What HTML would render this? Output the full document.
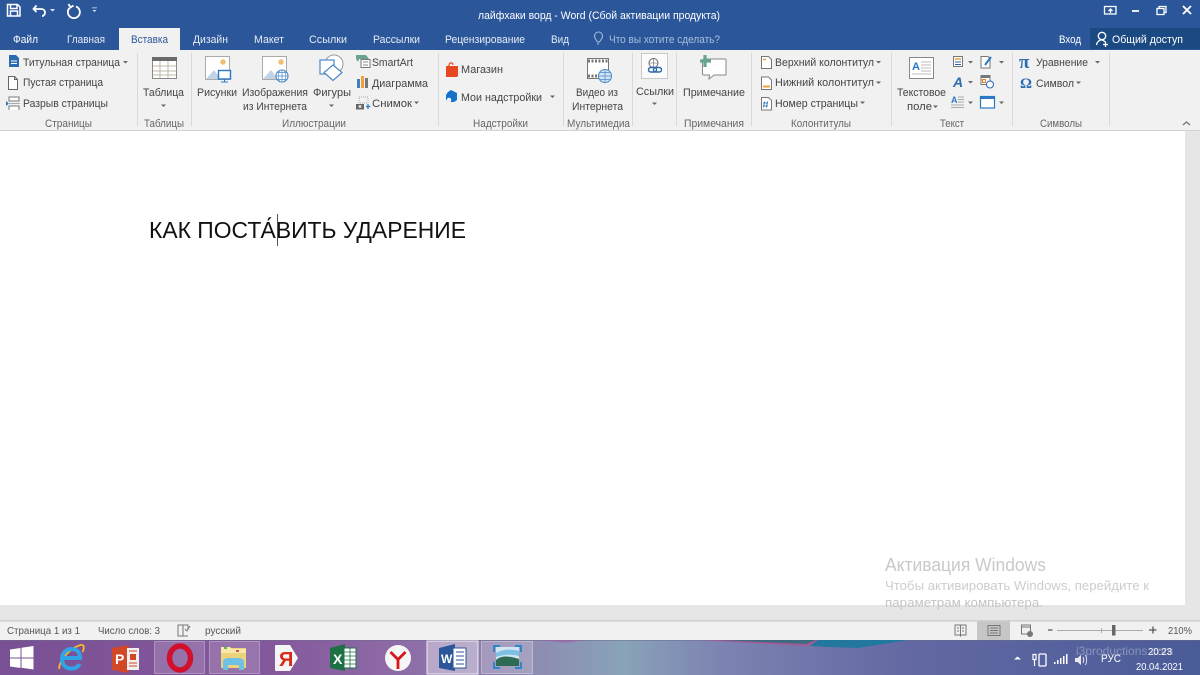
<!DOCTYPE html>
<html lang="ru"><head><meta charset="utf-8"><title>лайфхаки ворд - Word</title>
<style>
html,body{margin:0;padding:0;width:1200px;height:675px;overflow:hidden;background:#fff}
svg{display:block;position:absolute;left:0;top:0;filter:blur(.3px)}
text{font-family:"Liberation Sans","DejaVu Sans",sans-serif;font-size:11px;fill:#444}
.w text{fill:#fff}
.g text{fill:#666}
.s text{fill:#555;font-size:10.5px}
</style></head><body>
<svg width="1200" height="675" viewBox="0 0 1200 675" xmlns="http://www.w3.org/2000/svg">
<defs>
<linearGradient id="tb" x1="0" x2="1" y1="0" y2="0">
<stop offset="0" stop-color="#7a5094"/><stop offset=".22" stop-color="#83589b"/><stop offset=".33" stop-color="#8d6aa6"/><stop offset=".43" stop-color="#8f87b0"/><stop offset=".52" stop-color="#88a3b8"/><stop offset=".6" stop-color="#7d83b1"/><stop offset=".75" stop-color="#6469a3"/><stop offset="1" stop-color="#4a5b98"/>
</linearGradient>
</defs>
<!-- title bar -->
<rect width="1200" height="50" fill="#2b579a"/>
<rect x="1090" y="28" width="110" height="21" fill="#1b4a83"/>
<rect x="119" y="28" width="61" height="22" fill="#f1f1f1"/>
<rect y="50" width="1200" height="80" fill="#f1f1f1"/>
<rect y="130" width="1200" height="1" fill="#d2d2d2"/>
<rect y="131" width="1200" height="474" fill="#fff"/>
<rect x="1185" y="131" width="15" height="489" fill="#e6e6e6"/>
<rect y="605" width="1200" height="15" fill="#e6e6e6"/>
<rect y="620" width="1200" height="1.5" fill="#cfcfcf"/>
<rect y="621.500" width="1200" height="18.500" fill="#f1f1f1"/>
<!-- QAT -->
<g fill="none" stroke="#fff" stroke-width="1.500">
<path d="M7.500 4.500h10l2.500 2.500v9H7.500zM10.500 4.500v4h6.500v-4M10.500 16v-5h7v5"/>
<path d="M34 9h7c3 0 4 2 4 3.500S44 16 42 16M36.500 5.500 33.500 9l3 3" stroke-width="1.800"/>
<path d="M76 6.500A6 6 0 1 1 69.500 8M68.500 4l2 3.500 3-2" stroke-width="1.800"/>
</g>
<path d="M50 9h5l-2.500 2.500zM92 7.500h5v.8h-5zM92.500 10h4l-2 2z" fill="#dfe7f3"/>
<!-- window controls -->
<g fill="none" stroke="#fff" stroke-width="1.300">
<rect x="1104.500" y="6.500" width="11.500" height="7.500"/><path d="M1110.500 13V9M1108.500 11l2-2 2 2"/>
<path d="M1132 11h7" stroke-width="1.800"/>
<rect x="1157" y="8.500" width="7" height="6"/><path d="M1159 8.500V6.500h7v6h-2"/>
<path d="M1183 6l8 8M1191 6l-8 8" stroke-width="1.900"/>
</g>
<g class="w">
<text x="478" y="19" textLength="242" lengthAdjust="spacingAndGlyphs">лайфхаки ворд - Word (Сбой активации продукта)</text>
<text x="13" y="43" textLength="25" lengthAdjust="spacingAndGlyphs">Файл</text>
<text x="67" y="43" textLength="38" lengthAdjust="spacingAndGlyphs" style="fill:#e6ecf5">Главная</text>
<text x="193" y="43" textLength="35" lengthAdjust="spacingAndGlyphs" style="fill:#e6ecf5">Дизайн</text>
<text x="254" y="43" textLength="30" lengthAdjust="spacingAndGlyphs" style="fill:#e6ecf5">Макет</text>
<text x="309" y="43" textLength="38" lengthAdjust="spacingAndGlyphs" style="fill:#e6ecf5">Ссылки</text>
<text x="373" y="43" textLength="47" lengthAdjust="spacingAndGlyphs" style="fill:#e6ecf5">Рассылки</text>
<text x="445" y="43" textLength="80" lengthAdjust="spacingAndGlyphs" style="fill:#e6ecf5">Рецензирование</text>
<text x="551" y="43" textLength="18" lengthAdjust="spacingAndGlyphs" style="fill:#e6ecf5">Вид</text>
<text x="609" y="43" textLength="111" lengthAdjust="spacingAndGlyphs" style="fill:#a9bfdc">Что вы хотите сделать?</text>
<text x="1059" y="43" textLength="22" lengthAdjust="spacingAndGlyphs">Вход</text>
<text x="1112" y="43" textLength="71" lengthAdjust="spacingAndGlyphs">Общий доступ</text>
</g>
<text x="131" y="43" textLength="37" lengthAdjust="spacingAndGlyphs" style="fill:#2b579a">Вставка</text>
<path d="M597.500 42c-1-2-3-3-3-6a4 4 0 0 1 8 0c0 3-2 4-3 6zM597 44h2" fill="none" stroke="#a9bfdc"/>
<g fill="none" stroke="#fff" stroke-width="1.300"><circle cx="1102" cy="36" r="3.700"/><path d="M1096.500 45c.5-3 2-4.500 5-5.200 2 .7 3 1 4 2.500M1105.500 42v5M1103 44.500h5"/></g>

<!-- ribbon separators -->
<g fill="#d9d9d9">
<rect x="137" y="53" width="1" height="73"/><rect x="191" y="53" width="1" height="73"/><rect x="438" y="53" width="1" height="73"/><rect x="563" y="53" width="1" height="73"/><rect x="632" y="53" width="1" height="73"/><rect x="676" y="53" width="1" height="73"/><rect x="751" y="53" width="1" height="73"/><rect x="891" y="53" width="1" height="73"/><rect x="1012" y="53" width="1" height="73"/><rect x="1109" y="53" width="1" height="73"/>
</g>
<!-- ribbon labels -->
<g>
<text x="23" y="66" textLength="97" lengthAdjust="spacingAndGlyphs">Титульная страница</text>
<text x="23" y="86" textLength="80" lengthAdjust="spacingAndGlyphs">Пустая страница</text>
<text x="23" y="107" textLength="85" lengthAdjust="spacingAndGlyphs">Разрыв страницы</text>
<text x="143" y="96" textLength="41" lengthAdjust="spacingAndGlyphs">Таблица</text>
<text x="197" y="96" textLength="40" lengthAdjust="spacingAndGlyphs">Рисунки</text>
<text x="242" y="96" textLength="66" lengthAdjust="spacingAndGlyphs">Изображения</text>
<text x="243" y="110" textLength="64" lengthAdjust="spacingAndGlyphs">из Интернета</text>
<text x="313" y="96" textLength="38" lengthAdjust="spacingAndGlyphs">Фигуры</text>
<text x="372" y="66" textLength="41" lengthAdjust="spacingAndGlyphs">SmartArt</text>
<text x="372" y="87" textLength="56" lengthAdjust="spacingAndGlyphs">Диаграмма</text>
<text x="372" y="107" textLength="40" lengthAdjust="spacingAndGlyphs">Снимок</text>
<text x="461" y="73" textLength="42" lengthAdjust="spacingAndGlyphs">Магазин</text>
<text x="461" y="101" textLength="81" lengthAdjust="spacingAndGlyphs">Мои надстройки</text>
<text x="576" y="96" textLength="42" lengthAdjust="spacingAndGlyphs">Видео из</text>
<text x="572" y="110" textLength="51" lengthAdjust="spacingAndGlyphs">Интернета</text>
<text x="636" y="95" textLength="38" lengthAdjust="spacingAndGlyphs">Ссылки</text>
<text x="683" y="96" textLength="62" lengthAdjust="spacingAndGlyphs">Примечание</text>
<text x="775" y="66" textLength="99" lengthAdjust="spacingAndGlyphs">Верхний колонтитул</text>
<text x="775" y="86" textLength="99" lengthAdjust="spacingAndGlyphs">Нижний колонтитул</text>
<text x="775" y="107" textLength="83" lengthAdjust="spacingAndGlyphs">Номер страницы</text>
<text x="897" y="96" textLength="49" lengthAdjust="spacingAndGlyphs">Текстовое</text>
<text x="907" y="110" textLength="25" lengthAdjust="spacingAndGlyphs">поле</text>
<text x="1036" y="66" textLength="52" lengthAdjust="spacingAndGlyphs">Уравнение</text>
<text x="1036" y="87" textLength="38" lengthAdjust="spacingAndGlyphs">Символ</text>
</g>
<g class="g">
<text x="45" y="127" textLength="47" lengthAdjust="spacingAndGlyphs">Страницы</text>
<text x="144" y="127" textLength="40" lengthAdjust="spacingAndGlyphs">Таблицы</text>
<text x="282" y="127" textLength="64" lengthAdjust="spacingAndGlyphs">Иллюстрации</text>
<text x="473" y="127" textLength="55" lengthAdjust="spacingAndGlyphs">Надстройки</text>
<text x="567" y="127" textLength="63" lengthAdjust="spacingAndGlyphs">Мультимедиа</text>
<text x="684" y="127" textLength="60" lengthAdjust="spacingAndGlyphs">Примечания</text>
<text x="791" y="127" textLength="60" lengthAdjust="spacingAndGlyphs">Колонтитулы</text>
<text x="940" y="127" textLength="24" lengthAdjust="spacingAndGlyphs">Текст</text>
<text x="1040" y="127" textLength="42" lengthAdjust="spacingAndGlyphs">Символы</text>
</g>
<!-- dropdown arrows -->
<g fill="#666">
<path d="M123 61h5l-2.500 2.500zM161 104.500h5l-2.500 2.500zM329 104.500h5l-2.500 2.500zM414 101.500h5l-2.500 2.500zM550 95.500h5l-2.500 2.500zM652 102.500h5l-2.500 2.500zM876 61h5l-2.500 2.500zM876 81.500h5l-2.500 2.500zM860 101.500h5l-2.500 2.500zM933 105.500h5l-2.500 2.500zM968 61h5l-2.500 2.500zM968 81h5l-2.500 2.500zM968 101.500h5l-2.500 2.500zM999 61h5l-2.500 2.500zM999 101.500h5l-2.500 2.500zM1095 61h5l-2.500 2.500zM1076 81.500h5l-2.500 2.500z"/>
</g>
<path d="M1183 125l3.500-3 3.500 3" fill="none" stroke="#777" stroke-width="1.300"/>

<!-- Страницы icons -->
<path d="M9 55h7l3 3v9H9z" fill="#2b6cb0"/><path d="M11 61h6M11 63.500h6" stroke="#fff"/>
<path d="M8.500 76.500h6l3 3v10h-9zM14.500 76.500v3h3" fill="#fff" stroke="#666"/>
<path d="M9 97h10v4H9zM9 110v-4h10v4" fill="#fff" stroke="#777"/><path d="M6 101l3 2.500-3 2.500z" fill="#2b79c2"/><path d="M8 103.500h12" stroke="#aaa"/>
<!-- Table -->
<rect x="152.500" y="57.500" width="24" height="21" fill="#fff" stroke="#8a8a8a"/><rect x="152" y="57" width="25" height="4" fill="#6a6a6a"/>
<path d="M153 66h23M153 71h23M153 75h23M160 61v17M168 61v17" stroke="#c0b9a8"/>
<!-- Рисунки -->
<rect x="205.500" y="56.500" width="24" height="23" fill="#fff" stroke="#aaa"/><path d="M206 79l8-9 7 9z" fill="#c1d3e8"/><circle cx="223" cy="62" r="2.700" fill="#f2bd6c"/>
<rect x="218.500" y="70.500" width="12" height="8.500" fill="#fff" stroke="#2b79c2" stroke-width="1.400"/><path d="M221 82h7M224.500 79v3" stroke="#2b79c2"/>
<!-- Изображения -->
<rect x="262.500" y="56.500" width="24" height="23" fill="#fff" stroke="#aaa"/><path d="M263 79l8-9 7 9z" fill="#c1d3e8"/><circle cx="281" cy="62" r="2.700" fill="#f2bd6c"/>
<circle cx="282" cy="76" r="6" fill="#fff" stroke="#4a88c7" stroke-width="1.100"/><path d="M276 76h12M282 70v12M277.500 72.500h9M277.500 79.500h9M279.500 71c-1.500 3-1.500 7 0 10M284.500 71c1.500 3 1.500 7 0 10" fill="none" stroke="#4a88c7" stroke-width=".7"/>
<!-- Фигуры -->
<circle cx="334" cy="64" r="9" fill="#fff" stroke="#999"/><rect x="320" y="60" width="14" height="14" fill="#fff" stroke="#4a88c7" stroke-width="1.200"/><path d="M333 65l9 7.500-9 8-9-8z" fill="#fff" stroke="#4a88c7" stroke-width="1.200"/>
<!-- SmartArt etc -->
<path d="M356 55h10l3 4h-10l-1 3-2-3z" fill="#6aa48e"/><rect x="361" y="59.500" width="9" height="8" fill="#fff" stroke="#777"/><path d="M363 62h5M363 65h5" stroke="#888"/>
<rect x="357" y="79" width="3" height="9" fill="#3e7fc1"/><rect x="361" y="76" width="3" height="12" fill="#f0a13c"/><rect x="365" y="78" width="3" height="10" fill="#777"/>
<rect x="359" y="97" width="9" height="6" fill="none" stroke="#aaa" stroke-dasharray="1 1"/><rect x="356" y="104" width="8" height="5.500" fill="#666"/><circle cx="360" cy="106.500" r="1.500" fill="#ddd"/><path d="M366 106.500h4.500M368 104v5" stroke="#2b79c2" stroke-width="1.300"/>
<!-- Store / addins -->
<path d="M446 66h12v9c0 2-1 2-2 2h-10z" fill="#e8481f"/><path d="M449 66c0-4 4-4 4-1" fill="none" stroke="#e8481f" stroke-width="1.200"/>
<path d="M451 90l6 3v7l-3 2h-5l-3-2v-5l2-3z" fill="#1273c9"/><circle cx="449" cy="100" r="2.300" fill="#f1f1f1"/>
<!-- Video -->
<rect x="587.500" y="58.500" width="21" height="20" fill="#fff" stroke="#777"/><path d="M588 61h20M588 76h20" stroke="#777" stroke-width="3" stroke-dasharray="2 1.500"/>
<circle cx="605" cy="76" r="6.500" fill="#d5e4f3" stroke="#4a88c7"/><path d="M598.500 76h13M605 69.500v13M600 72.500h10M600 79.500h10" stroke="#4a88c7" stroke-width=".7"/>
<!-- Link -->
<rect x="641.500" y="53.500" width="26" height="25" fill="#fbfbfb" stroke="#c9c9c9"/>
<circle cx="653.500" cy="63" r="4.500" fill="none" stroke="#666"/><path d="M649 63h9M653.500 58.500v9" stroke="#666" stroke-width=".6"/>
<rect x="648.500" y="67.500" width="8" height="4.500" rx="2.200" fill="none" stroke="#2b67ae" stroke-width="1.400"/><rect x="653.500" y="67.500" width="8" height="4.500" rx="2.200" fill="none" stroke="#2b67ae" stroke-width="1.400"/>
<!-- Comment -->
<path d="M703 59h22c1 0 1 0 1 1v14c0 1 0 1-1 1h-11l-5 4 .5-4h-5c-1 0-2 0-2-1V62" fill="#fff" stroke="#888"/>
<path d="M705 55v12M700 61h11" stroke="#66a593" stroke-width="3.200"/>
<!-- Header/footer -->
<path d="M761.500 56.500h7l3 3v9h-10z" fill="#fff" stroke="#777"/><path d="M763 59.500h3" stroke="#f0a13c" stroke-width="1.500"/>
<path d="M761.500 77h7l3 3v9.500h-10z" fill="#fff" stroke="#777"/><path d="M763 86.500h7" stroke="#f0a13c" stroke-width="2"/>
<path d="M761.500 97.500h7l3 3v9.500h-10z" fill="#fff" stroke="#777"/><path d="M764.500 101.500l-1 6M767.500 101.500l-1 6M763 103h5M763 106h5" stroke="#2b67ae" stroke-width=".8"/>
<!-- Text box -->
<rect x="909.500" y="57.500" width="24" height="21" fill="#fff" stroke="#888"/><text x="912" y="70" style="font-size:11px;fill:#2b79c2" font-weight="bold">A</text><path d="M921 62h10M921 65h10M921 68h10M921 71h10M912 74h19" stroke="#bbb"/>
<!-- Text small icons -->
<rect x="953.500" y="56.500" width="9" height="10" fill="#fff" stroke="#777"/><path d="M955 59h6" stroke="#f0a13c" stroke-width="1.500"/><path d="M955 62h6M955 64.500h6" stroke="#2b67ae"/>
<text x="953" y="87" style="font-size:14px;fill:#2b6cb0;font-style:italic;font-weight:bold">A</text>
<text x="951" y="103" style="font-size:9px;fill:#2b79c2;font-weight:bold">A</text><path d="M958 97h6M958 99.500h6M958 102h6M951 105h13M951 107.500h13" stroke="#aaa"/>
<path d="M981 56.500h7l2 2v9.500h-9z" fill="#fff" stroke="#777"/><path d="M985 65l6-8" stroke="#2b79c2" stroke-width="2"/>
<rect x="981" y="75.500" width="9" height="9" fill="#fff" stroke="#777"/><path d="M981 77h9" stroke="#777" stroke-width="2"/><rect x="982.500" y="79.500" width="3" height="3" fill="none" stroke="#e07b2a"/><circle cx="990" cy="84.500" r="3.500" fill="#fff" stroke="#2b67ae"/>
<rect x="980.500" y="96.500" width="14" height="11.500" fill="#fff" stroke="#2b79c2" stroke-width="1.200"/><rect x="980" y="96" width="15" height="3" fill="#2b79c2"/>
<!-- Symbols -->
<text x="1019" y="68" style="font-size:19px;fill:#2b6cb0;font-weight:bold;font-family:'Liberation Serif',serif">π</text>
<text x="1020" y="88" style="font-size:15px;fill:#2b6cb0;font-weight:bold;font-family:'Liberation Serif',serif">Ω</text>

<!-- Document text -->
<text x="149" y="238" textLength="317" lengthAdjust="spacingAndGlyphs" style="font-size:23.500px;fill:#111">КАК ПОСТА́ВИТЬ УДАРЕНИЕ</text>
<rect x="277" y="214" width="1" height="32" fill="#555"/>

<!-- Activation -->
<text x="885" y="571" textLength="161" lengthAdjust="spacingAndGlyphs" style="font-size:18px;fill:#c9c9c9">Активация Windows</text>
<text x="885" y="590" textLength="264" lengthAdjust="spacingAndGlyphs" style="font-size:13px;fill:#cdcdcd">Чтобы активировать Windows, перейдите к</text>
<text x="885" y="607" textLength="158" lengthAdjust="spacingAndGlyphs" style="font-size:13px;fill:#c4c4c4">параметрам компьютера.</text>

<!-- Status bar -->
<g class="s">
<text x="7" y="634" textLength="73" lengthAdjust="spacingAndGlyphs">Страница 1 из 1</text>
<text x="98" y="634" textLength="62" lengthAdjust="spacingAndGlyphs">Число слов: 3</text>
<text x="205" y="634" textLength="36" lengthAdjust="spacingAndGlyphs">русский</text>
<text x="1168" y="634" textLength="24" lengthAdjust="spacingAndGlyphs">210%</text>
</g>
<path d="M178 625h5v11h-5zM183 625h5v4M183 636h5" fill="none" stroke="#777"/><path d="M185 629l2 2 3-5" fill="none" stroke="#777"/>
<rect x="977" y="621.500" width="33" height="18.500" fill="#c6c6c6"/>
<path d="M955 625h5l.5 1 .5-1h5v10h-5l-.5 1-.5-1h-5zM960.500 626v9M957 628h2M957 631h2M962 628h2M962 631h2" fill="none" stroke="#777"/>
<rect x="988" y="625.500" width="12" height="10" fill="none" stroke="#777"/><path d="M990 628h8M990 630.500h8M990 633h8" stroke="#777"/>
<rect x="1021.500" y="625" width="9" height="9" fill="none" stroke="#777"/><path d="M1021 627h10" stroke="#777"/><circle cx="1030" cy="634" r="3" fill="#777"/>
<path d="M1048 630h4.500M1149 630h7.500M1153 626.500v7" stroke="#555" stroke-width="1.300"/>
<rect x="1057" y="630" width="86" height="1" fill="#aaa"/><rect x="1101" y="628" width="1" height="5" fill="#aaa"/><rect x="1112" y="625" width="3.500" height="10.500" fill="#666"/>

<!-- Taskbar -->
<rect y="640" width="1200" height="35" fill="url(#tb)"/>
<rect y="640" width="1200" height="1" fill="#6a6a8a" opacity=".5"/>
<path d="M540 640h45l-20 3z" fill="#a05fa8" opacity=".6"/>
<path d="M700 640h120l-12 6-5 0z" fill="#a25a96"/><path d="M718 640h98l-10 4z" fill="#3d6a80"/>
<path d="M818 640h90l-50 8-30 -1-18-1z" fill="#22779f"/>
<!-- pinned highlights -->
<rect x="154.500" y="641.500" width="50" height="32" fill="#fff" fill-opacity=".17" stroke="#fff" stroke-opacity=".3"/>
<rect x="209.500" y="641.500" width="50" height="32" fill="#fff" fill-opacity=".17" stroke="#fff" stroke-opacity=".3"/>
<rect x="427" y="641" width="51" height="33" fill="#fff" fill-opacity=".38" stroke="#fff" stroke-opacity=".8"/>
<rect x="481.500" y="641.500" width="51" height="32" fill="#fff" fill-opacity=".2" stroke="#fff" stroke-opacity=".35"/>
<!-- Windows -->
<path d="M10 649.500l10.500-1.500v9.500H10zM21.500 647.800L33.500 646v11.500h-12zM10 658.500h10.500v9.500L10 666.500zM21.500 658.500h12v11l-12-1.700z" fill="#fff"/>
<!-- IE -->
<path d="M59.500 669c-2-5 8-20 21-24 4-1 4 3 2 7" fill="none" stroke="#f2b928" stroke-width="1.800"/>
<path d="M63 658h17c0-6-3.500-9-8.500-9S62 653 62 659s4 9.500 9.500 9.500c4 0 7-2 8-4.500" fill="none" stroke="#2fa4e7" stroke-width="4"/>
<!-- PPT -->
<path d="M112 648l17-3v28l-17-3z" fill="#d24726"/><rect x="127" y="648" width="12" height="22" fill="#f0f0f0"/><path d="M129 651h8M129 663h8M129 666h8" stroke="#d24726"/><path d="M130 654h6v6h-6z" fill="#d24726"/><text x="115" y="664" style="font-size:14px;font-weight:bold;fill:#fff">P</text>
<!-- Opera -->
<ellipse cx="180" cy="658" rx="10.500" ry="12" fill="none" stroke="#d2102c" stroke-width="5.500"/>
<!-- Explorer -->
<path d="M221 648h25v20h-25z" fill="#edd27e"/><path d="M221 647h9l2 2h14v4h-25z" fill="#f7e8a8"/><rect x="224" y="647" width="3" height="2" fill="#5cb85c"/><rect x="236" y="650" width="3" height="2" fill="#d9534f"/>
<path d="M223 662c0-3 3-4 6-4h9c3 0 6 1 6 4v8h-5v-5h-11v5h-5z" fill="#6ec1e4"/>
<!-- Yandex -->
<path d="M276 645h14l8 13-8 13h-14c-1 0-1-1-1-2v-22c0-1 0-2 1-2z" fill="#f5f5f5"/><text x="279" y="666" style="font-size:20px;fill:#d92a1c;font-weight:bold">Я</text>
<!-- Excel -->
<path d="M330 648l15-4v27l-15-3z" fill="#1d7145"/><rect x="344" y="648" width="12" height="20" fill="#fff" stroke="#1d7145"/><path d="M344 652h12M344 656h12M344 660h12M344 664h12M350 648v20" stroke="#1d7145" stroke-width=".8"/><text x="333" y="664" style="font-size:14px;font-weight:bold;fill:#fff">X</text>
<!-- Ya browser -->
<circle cx="398" cy="658" r="13" fill="#f6f6f6"/><path d="M390.500 652l7.500 7.500M405.500 652l-7.500 7.500M398 659v10" stroke="#d9161a" stroke-width="2.800" fill="none"/>
<!-- Word -->
<path d="M439 648l16-4v27l-16-3z" fill="#2b579a"/><rect x="453" y="648" width="13" height="20" fill="#fff" stroke="#2b579a"/><path d="M456 652h8M456 656h8M456 660h8M456 664h8" stroke="#2b579a"/><text x="441" y="663" style="font-size:12px;font-weight:bold;fill:#fff">W</text>
<!-- Photo -->
<rect x="496" y="647" width="23" height="19" fill="#cfe6f2"/><path d="M496 660c6-5 12-4 23-1v7h-23z" fill="#2f6a55"/><path d="M496 653c8-4 15-4 23-2v5c-8-2-15-2-23 1z" fill="#7cc0e4"/>
<path d="M494 652v-6h6M515 646h6v6M494 662v6h6M515 668h6v-6" fill="none" stroke="#2f86c8" stroke-width="2"/>

<!-- Tray -->
<path d="M1014 659.500l3.500-3 3.500 3z" fill="#fff"/>
<path d="M1033 654.500h3v5h-3zM1034.500 660v6" fill="none" stroke="#fff" stroke-width="1.200"/><rect x="1039" y="654" width="7" height="12" rx="1" fill="none" stroke="#fff" stroke-width="1.300"/>
<g fill="#fff"><rect x="1054" y="662" width="1.500" height="2"/><rect x="1057" y="660" width="1.500" height="4"/><rect x="1060" y="658" width="1.500" height="6"/><rect x="1063" y="656" width="1.500" height="8"/><rect x="1066" y="654" width="1.500" height="10"/></g>
<path d="M1075 658h2.500l3.500-3v10l-3.500-3H1075z" fill="#e8e8f0"/><path d="M1083 657c1 2 1 4 0 6M1085.500 655c1.500 3 1.500 7 0 10" fill="none" stroke="#e8e8f0"/>
<text x="1076" y="655" style="font-size:12px;fill:#9da4c6" opacity=".75">i3productions.com</text>
<g class="w">
<text x="1101" y="662" textLength="20" lengthAdjust="spacingAndGlyphs">РУС</text>
<text x="1148" y="655" textLength="24" lengthAdjust="spacingAndGlyphs" style="font-size:10.500px">20:23</text>
<text x="1136" y="670" textLength="47" lengthAdjust="spacingAndGlyphs" style="font-size:10.500px">20.04.2021</text>
</g>
</svg>
</body></html>
